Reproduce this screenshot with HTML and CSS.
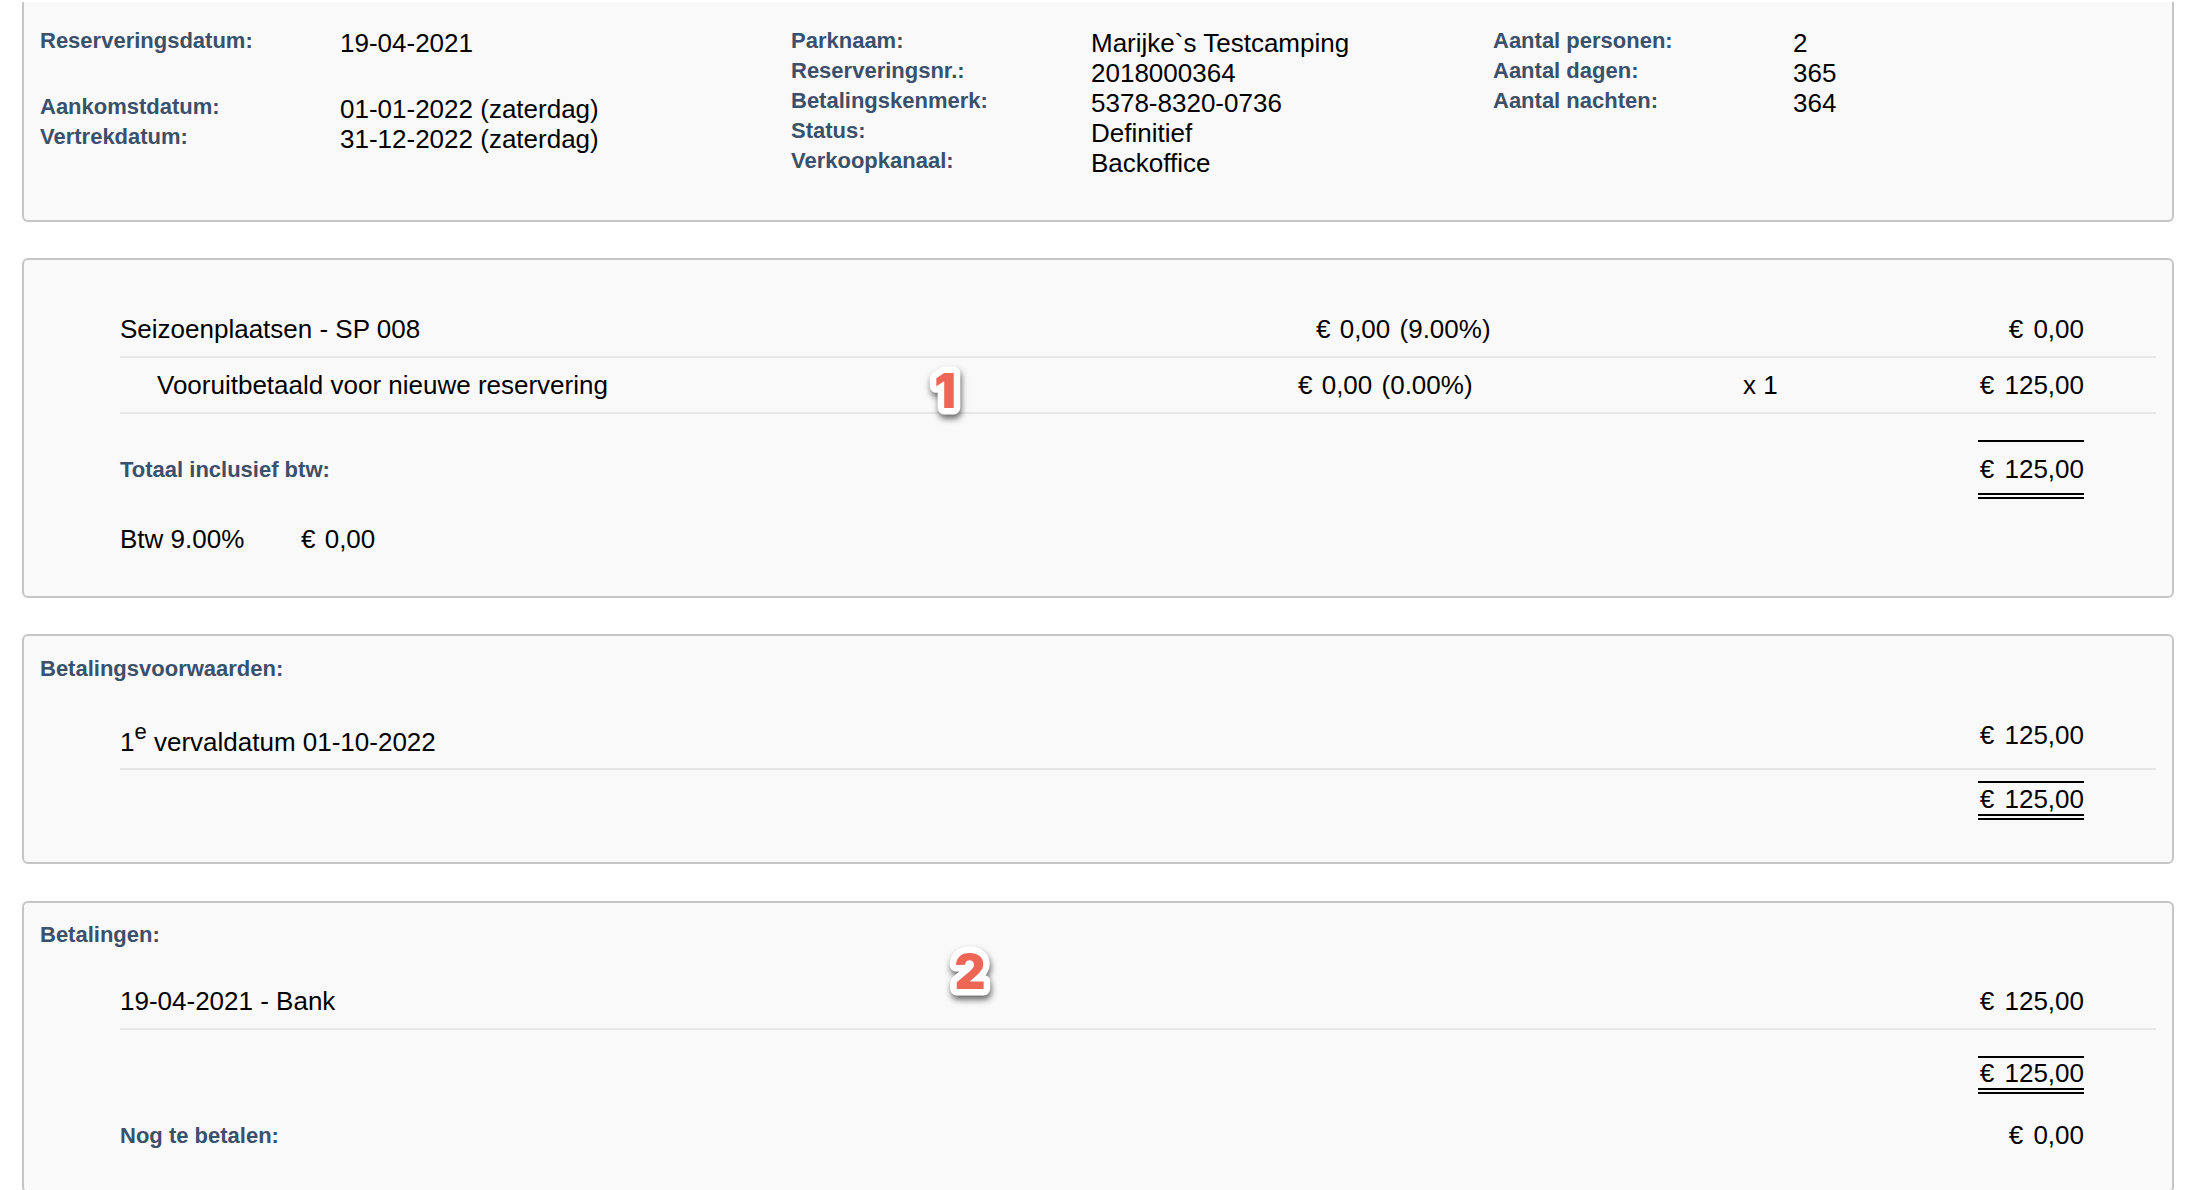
FILE: index.html
```html
<!DOCTYPE html>
<html lang="nl">
<head>
<meta charset="utf-8">
<title>Reservering</title>
<link rel="stylesheet" href="styles.css">
</head>
<body>
<main class="page">
  <section class="card card-info">
    <dl class="info info-a">
      <dt>Reserveringsdatum:</dt><dd>19-04-2021</dd>
      <div class="info-gap"></div>
      <dt>Aankomstdatum:</dt><dd>01-01-2022 (zaterdag)</dd>
      <dt>Vertrekdatum:</dt><dd>31-12-2022 (zaterdag)</dd>
    </dl>
    <dl class="info info-b">
      <dt>Parknaam:</dt><dd>Marijke`s Testcamping</dd>
      <dt>Reserveringsnr.:</dt><dd>2018000364</dd>
      <dt>Betalingskenmerk:</dt><dd>5378-8320-0736</dd>
      <dt>Status:</dt><dd>Definitief</dd>
      <dt>Verkoopkanaal:</dt><dd>Backoffice</dd>
    </dl>
    <dl class="info info-c">
      <dt>Aantal personen:</dt><dd>2</dd>
      <dt>Aantal dagen:</dt><dd>365</dd>
      <dt>Aantal nachten:</dt><dd>364</dd>
    </dl>
  </section>

  <section class="card card-lines">
    <div class="row row-main">
      <span class="name">Seizoenplaatsen - SP 008</span>
      <span class="price">€ 0,00 (9.00%)</span>
      <span class="amount">€ 0,00</span>
    </div>
    <div class="row row-sub">
      <span class="name">Vooruitbetaald voor nieuwe reservering</span>
      <span class="price">€ 0,00 (0.00%)</span>
      <span class="qty">x 1</span>
      <span class="amount">€ 125,00</span>
    </div>
    <div class="total total-grand">
      <span class="label">Totaal inclusief btw:</span>
      <span class="sum sum-tall">€ 125,00</span>
    </div>
    <div class="vat"><span class="vat-name">Btw 9.00%</span><span class="vat-sum">€ 0,00</span></div>
    <svg class="badge badge-one" viewBox="0 0 60 70" aria-hidden="true"><text x="30" y="48">1</text></svg>
  </section>

  <section class="card card-terms">
    <h2 class="label heading">Betalingsvoorwaarden:</h2>
    <div class="row row-terms">
      <span class="name terms-name">1<sup>e</sup> vervaldatum 01-10-2022</span>
      <span class="amount">€ 125,00</span>
    </div>
    <div class="total total-small"><span class="sum sum-terms">€ 125,00</span></div>
  </section>

  <section class="card card-pay">
    <h2 class="label heading">Betalingen:</h2>
    <div class="row row-pay">
      <span class="name">19-04-2021 - Bank</span>
      <span class="amount">€ 125,00</span>
    </div>
    <div class="total total-pay"><span class="sum">€ 125,00</span></div>
    <div class="due">
      <span class="label">Nog te betalen:</span>
      <span class="amount">€ 0,00</span>
    </div>
    <svg class="badge badge-two" viewBox="0 0 60 70" aria-hidden="true"><text x="30" y="49">2</text></svg>
  </section>
</main>
</body>
</html>
```
FILE: styles.css
```css
* { box-sizing: border-box; }
html, body { margin: 0; background: #fff; }
body {
  font-family: "Liberation Sans", Arial, sans-serif;
  font-size: 26px;
  line-height: 30px;
  color: #000;
  height: 1190px;
  overflow: hidden;
}
.page {
  display: flex;
  flex-direction: column;
  gap: 37px;
  padding: 2px 22px 0 22px;
}
.card {
  position: relative;
  flex: none;
  background: #f9f9f9;
  border: 2px solid #c6c6c6;
  border-radius: 6px;
}
.label, dt {
  font-size: 22px;
  font-weight: 700;
  color: #3a506b;
}

/* Reservation header */
.card-info {
  display: flex;
  border-top: 0;
  border-radius: 0 0 6px 6px;
  padding: 26px 0 42px 16px;
  height: 220px;
  margin-bottom: -1px;
}
.info {
  display: grid;
  grid-template-columns: 300px 1fr;
  grid-auto-rows: 30px;
  align-content: start;
  margin: 0;
}
.info dt { line-height: 26px; }
.info dd { margin: 0; }
.info-a { width: 751px; grid-template-rows: 30px 36px; }
.info-b { width: 702px; }
.info-c { flex: 1; }
.info-gap { grid-column: 1 / -1; }

/* Line rows */
.row {
  display: flex;
  margin-right: 16px;
  margin-left: 96px;
  border-bottom: 2px solid #e6e6e6;
  padding-right: 72px;
}
.amount { margin-left: auto; text-align: right; white-space: nowrap; word-spacing: 3px; }
.price { word-spacing: 2px; }
.vat-sum { word-spacing: 2px; }
.card-lines { padding: 42px 0 41px; height: 340px; margin-bottom: -1px; }
.row-main, .row-sub { height: 56px; align-items: center; }
.row-main .name { width: 1196px; }
.row-sub { padding-left: 37px; }
.row-sub .name { width: 1141px; }
.row-sub .price { width: 445px; }

/* Totals */
.total {
  display: flex;
  justify-content: space-between;
  align-items: center;
  margin: 26px 88px 0 96px;
}
.total-small, .total-pay { justify-content: flex-end; }
.total-small { margin-top: 11px; }
.sum {
  width: 106px;
  text-align: right;
  white-space: nowrap;
  word-spacing: 3px;
  border-top: 2px solid #000;
  border-bottom: 6px double #000;
}
.sum-tall { padding-top: 3px; line-height: 48px; }
.sum-terms { padding-top: 1px; }
.vat { display: flex; margin: 25px 0 0 96px; }
.vat-name { width: 181px; }

/* Terms and payments */
.heading { margin: 0; line-height: 30px; padding-left: 16px; }
.card-terms { padding-top: 18px; padding-bottom: 42px; height: 230px; }
.row-terms { align-items: flex-start; padding-top: 36px; padding-bottom: 11px; }
.terms-name { padding-top: 7px; }
.terms-name sup { font-size: 22px; line-height: 0; vertical-align: 12px; }
.card-pay { padding-top: 17px; height: 292px; }
.row-pay { padding-top: 36px; padding-bottom: 12px; }
.due {
  display: flex;
  margin: 26px 88px 0 96px;
}
.due .label { padding-top: 1px; }

/* Annotation badges */
.badge {
  position: absolute;
  width: 60px;
  height: 70px;
  overflow: visible;
  filter: drop-shadow(1px 4px 3px rgba(0, 0, 0, .6));
}
.badge text {
  font-family: Inter, Roboto, "Liberation Sans", sans-serif;
  font-size: 48px;
  font-weight: 900;
  text-anchor: middle;
  fill: #ee6655;
  stroke: #fff;
  stroke-width: 13px;
  stroke-linejoin: round;
  paint-order: stroke;
}
.badge-one { left: 891px; top: 100px; }
.badge-two { left: 916px; top: 37px; }
```
